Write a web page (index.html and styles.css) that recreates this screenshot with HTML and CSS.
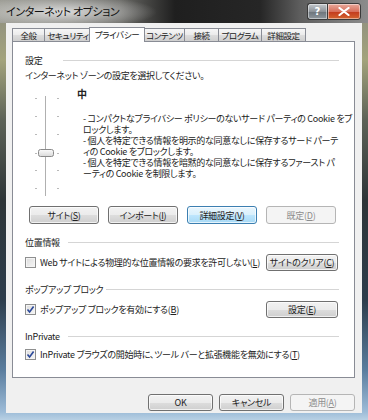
FILE: index.html
```html
<!DOCTYPE html>
<html lang="ja">
<head>
    <meta charset="UTF-8">
    <title>インターネット オプション</title>
    <link rel="stylesheet" href="styles.css">
</head>
<body>
<div class="window">
    <div class="titlebar">
        <span class="title">インターネット オプション</span>
        <div class="caption-buttons">
            <span class="cap-btn help">?</span>
            <span class="cap-btn close">
                <svg width="12" height="9" viewBox="0 0 12 9"><path d="M1.5 1 L10.5 8 M10.5 1 L1.5 8" stroke="#fff" stroke-width="2.2" stroke-linecap="round"/></svg>
            </span>
        </div>
    </div>

    <div class="client">
        <div class="tabs">
            <span class="tab w-1">全般</span>
            <span class="tab w-2">セキュリティ</span>
            <span class="tab active">プライバシー</span>
            <span class="tab w-4">コンテンツ</span>
            <span class="tab w-5">接続</span>
            <span class="tab w-6">プログラム</span>
            <span class="tab w-7">詳細設定</span>
        </div>

        <div class="panel">
            <div class="group-head first"><span>設定</span><i class="rule wide"></i></div>
            <p class="prompt">インターネット ゾーンの設定を選択してください。</p>

            <div class="slider-area">
                <svg class="slider" width="40" height="112" viewBox="0 0 40 112">
                    <g stroke="#b9b9b9" stroke-width="1">
                        <path d="M4 10.5h2M4 28.5h2M4 46.5h2M4 65.5h2M4 82.5h2M4 100.5h2"/>
                        <path d="M26 10.5h2M26 28.5h2M26 46.5h2M26 65.5h2M26 82.5h2M26 100.5h2"/>
                    </g>
                    <path d="M14.5 8 V108" stroke="#b0b0b0" stroke-width="1"/>
                    <path d="M15.5 8 V108" stroke="#ffffff" stroke-width="1"/>
                    <defs>
                        <linearGradient id="thumb" x1="0" y1="0" x2="0" y2="1">
                            <stop offset="0" stop-color="#fbfbfb"/>
                            <stop offset="1" stop-color="#d9d9d9"/>
                        </linearGradient>
                    </defs>
                    <rect x="7.5" y="61.5" width="15" height="7" rx="2" fill="url(#thumb)" stroke="#8a8a8a"/>
                </svg>
                <div class="level">
                    <div class="level-name">中</div>
                    <p class="level-desc">- コンパクトなプライバシー ポリシーのないサード パーティの Cookie をブ<br>ロックします。<br>- 個人を特定できる情報を明示的な同意なしに保存するサード パーテ<br>ィの Cookie をブロックします。<br>- 個人を特定できる情報を暗黙的な同意なしに保存するファースト パ<br>ーティの Cookie を制限します。</p>
                </div>
            </div>

            <div class="button-row">
                <button class="btn">サイト(<u>S</u>)</button>
                <button class="btn">インポート(<u>I</u>)</button>
                <button class="btn default">詳細設定(<u>V</u>)</button>
                <button class="btn" disabled>既定(<u>D</u>)</button>
            </div>

            <div class="group-head"><span>位置情報</span><i class="rule"></i></div>
            <div class="option-row">
                <label class="check"><span class="box"></span>Web サイトによる物理的な位置情報の要求を許可しない(<u>L</u>)</label>
                <button class="btn side">サイトのクリア(<u>C</u>)</button>
            </div>

            <div class="group-head"><span>ポップアップ ブロック</span><i class="rule tight"></i></div>
            <div class="option-row">
                <label class="check"><span class="box checked"><svg width="9" height="9" viewBox="0 0 9 9"><path d="M1.5 4.5 L3.6 7 L7.6 1.5" fill="none" stroke="#2a4899" stroke-width="1.6"/></svg></span>ポップアップ ブロックを有効にする(<u>B</u>)</label>
                <button class="btn side">設定(<u>E</u>)</button>
            </div>

            <div class="group-head"><span>InPrivate</span><i class="rule"></i></div>
            <div class="option-row single">
                <label class="check"><span class="box checked"><svg width="9" height="9" viewBox="0 0 9 9"><path d="M1.5 4.5 L3.6 7 L7.6 1.5" fill="none" stroke="#2a4899" stroke-width="1.6"/></svg></span>InPrivate ブラウズの開始時に、ツール バーと拡張機能を無効にする(<u>T</u>)</label>
            </div>
        </div>

        <div class="footer">
            <button class="btn foot">OK</button>
            <button class="btn foot">キャンセル</button>
            <button class="btn foot" disabled>適用(<u>A</u>)</button>
        </div>
    </div>
</div>
</body>
</html>
```

FILE: styles.css
```css
/* Windows 7 style dialog */
body {
    margin: 0;
    font-family: "Noto Sans CJK JP", sans-serif;
    font-feature-settings: "palt";
    font-size: 9px;
    letter-spacing: -0.3px;
    color: #222;
}

.window {
    width: 368px;
    height: 420px;
    display: flex;
    flex-direction: column;
    box-sizing: border-box;
    /* glass frame */
    background: linear-gradient(to bottom, #8a8a80 0, #a3a37c 60px, #5d6257 120px, #2e3538 200px, #2d3d4c 300px, #5a7d9e 370px, #9dbcd8 412px, #b8d0e4 420px);
}

.titlebar {
    height: 23px;
    flex: none;
    display: flex;
    justify-content: space-between;
    align-items: flex-start;
    background:
        radial-gradient(ellipse 95px 17px at 62px 12px, rgba(225, 225, 225, 0.95), rgba(225, 225, 225, 0) 100%),
        linear-gradient(to right, #9a9a92 0, #6a6a66 120px, #1f1f1f 175px, #262626 260px, #5e5e5e 300px, #8c8c8c 368px);
}

.title {
    font-size: 11px;
    color: #111;
    margin: 3px 0 0 6px;
    letter-spacing: -0.4px;
}

.caption-buttons {
    display: flex;
    margin: 3px 7px 0 0;
}

.cap-btn {
    height: 15px;
    display: flex;
    align-items: center;
    justify-content: center;
    border: 1px solid #3a3a3a;
    box-shadow: inset 0 0 0 1px rgba(255, 255, 255, 0.45);
}

.help {
    width: 19px;
    border-radius: 3px 0 0 3px;
    border-right: none;
    background: linear-gradient(to bottom, #c4c8cc 0, #8d9399 50%, #6b737a 51%, #8e969c 100%);
    color: #fff;
    font-family: "DejaVu Sans", sans-serif;
    font-size: 10px;
    font-weight: bold;
    letter-spacing: 0;
}

.close {
    width: 32px;
    border-radius: 0 3px 3px 0;
    background: linear-gradient(to bottom, #e9a99c 0, #d7705c 50%, #c2391d 51%, #d3642f 100%);
}

.client {
    flex: 1;
    margin: 0 6px 7px 6px;
    background: #f0f0f0;
    padding: 4px 7px 0 6px;
    display: flex;
    flex-direction: column;
}

/* tabs */
.tabs {
    display: flex;
    align-items: flex-end;
    height: 14px;
    position: relative;
    z-index: 1;
}

.tab {
    height: 12px;
    line-height: 12px;
    text-align: center;
    border: 1px solid #898c95;
    border-bottom: none;
    margin-right: -1px;
    background: linear-gradient(to bottom, #f6f6f6 0, #ebebeb 50%, #dddddd 51%, #cfcfcf 100%);
    font-size: 8.5px;
    letter-spacing: -0.4px;
    white-space: nowrap;
    overflow: hidden;
}

.w-1 { width: 31px; }
.w-2 { width: 46px; }
.w-4 { width: 39px; }
.w-5 { width: 33px; }
.w-6 { width: 42px; }
.w-7 { width: 43px; }

.tab.active {
    width: 54px;
    height: 14px;
    line-height: 13px;
    margin: 0 -1px 0 -2px;
    background: #fff;
    position: relative;
    top: 1px;
}

.panel {
    height: 335px;
    background: #fff;
    border: 1px solid #898c95;
    padding: 0 15px 0 12px;
}

.group-head {
    display: flex;
    align-items: center;
    height: 13px;
    margin-top: 12px;
}

.rule {
    flex: 1;
    height: 0;
    border-top: 1px solid #d5d5d5;
    margin-left: 8px;
}

.rule.wide { margin-left: 21px; }
.rule.tight { margin-left: 3px; }

.prompt {
    margin: 3px 0 0 0;
    line-height: 12px;
}

.slider-area {
    display: flex;
    height: 118px;
    margin-top: 6px;
}

.slider {
    margin-left: 6px;
    flex: none;
}

.level {
    margin-left: 6px;
}

.level-name {
    font-weight: bold;
    font-size: 10px;
    line-height: 12px;
}

.level-desc {
    margin: 13px 0 0 6px;
    line-height: 11px;
    font-size: 9px;
    white-space: nowrap;
}

/* buttons */
.btn {
    font-family: inherit;
    font-feature-settings: "palt";
    font-size: 9px;
    letter-spacing: -0.3px;
    color: #222;
    height: 18px;
    padding: 0;
    white-space: nowrap;
    border: 1px solid #707070;
    border-radius: 3px;
    background: linear-gradient(to bottom, #f2f2f2 0, #ebebeb 50%, #dddddd 51%, #cfcfcf 100%);
    box-shadow: inset 0 0 0 1px rgba(255, 255, 255, 0.7);
}

.btn u {
    text-underline-offset: 1px;
}

.btn.default {
    border-color: #3c7fb1;
    background: linear-gradient(to bottom, #eaf6fd 0, #d9f0fc 50%, #bee6fd 51%, #a7d9f5 100%);
}

.btn:disabled {
    border-color: #b5b5b5;
    background: #f4f4f4;
    color: #8d8d8d;
    box-shadow: none;
}

.button-row {
    display: flex;
    gap: 9px;
    margin: 0 0 0 4px;
}

.button-row .btn {
    width: 70px;
}

.option-row {
    display: flex;
    align-items: center;
    justify-content: space-between;
    height: 17px;
    margin-top: 5px;
}

.option-row.single {
    margin-top: 3px;
}

.btn.side {
    width: 72px;
    height: 17px;
    margin-right: 1px;
}

.check {
    display: flex;
    align-items: center;
    white-space: nowrap;
}

.box {
    width: 11px;
    height: 11px;
    box-sizing: border-box;
    border: 1px solid #8e8f8f;
    background: linear-gradient(135deg, #dcdcdc 0, #f6f6f6 100%);
    box-shadow: inset 0 0 0 1px #f4f4f4;
    margin-right: 4px;
    display: flex;
    align-items: center;
    justify-content: center;
}

.footer {
    display: flex;
    justify-content: flex-end;
    gap: 6px;
    margin-top: 16px;
}

.btn.foot {
    width: 65px;
    height: 17px;
}
```
